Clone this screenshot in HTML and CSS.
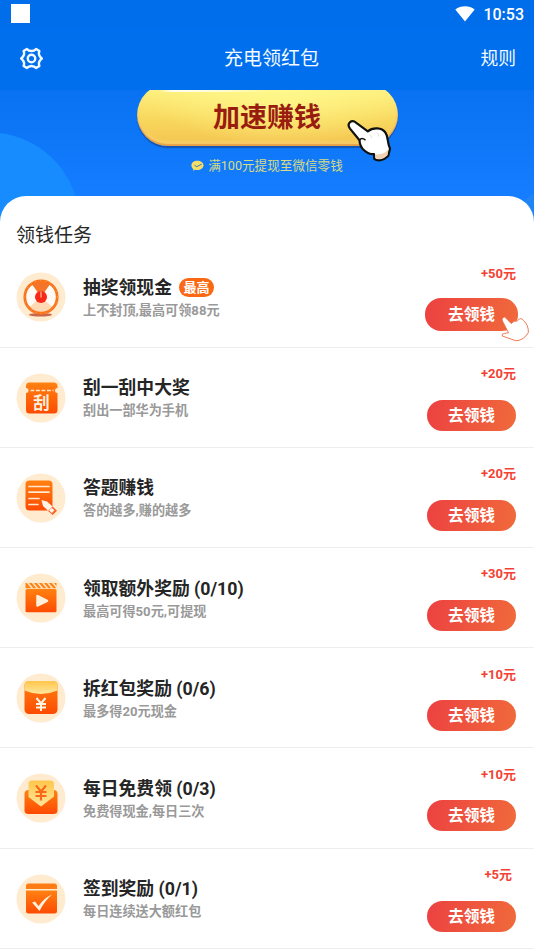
FILE: index.html
```html
<!DOCTYPE html>
<html lang="zh-CN">
<head>
<meta charset="utf-8">
<title>充电领红包</title>
<link rel="stylesheet" href="styles.css">
</head>
<body>
<svg class="defs" width="0" height="0" aria-hidden="true">
  <defs>
    <linearGradient id="orange" x1="0" y1="0" x2="0" y2="1"><stop offset="0" stop-color="#ff8112"/><stop offset="1" stop-color="#fd4b02"/></linearGradient>
    <linearGradient id="gold" x1="0" y1="0" x2="0" y2="1"><stop offset="0" stop-color="#ffc64a"/><stop offset="1" stop-color="#ffe69d"/></linearGradient>
  </defs>
</svg>
<div class="screen">
  <div class="status">
    <span class="square"></span>
    <svg class="wifi" width="20" height="16" viewBox="0 0 20 16"><path d="M.3 3.4C5.8-.8 14.2-.8 19.7 3.4L10 15.6z" fill="#fff"/></svg>
    <span class="time">10:53</span>
  </div>
  <header class="bar">
    <svg class="gear" width="23" height="23" viewBox="0 0 24 24" fill="none" stroke="#f2f8ff" stroke-width="2.5" stroke-linejoin="round"><path d="M7.200 2Q9 4.200 12 4.200T16.800 2L20.200 4.200Q19.200 7 20.300 9T22.800 12Q21.400 13 20.300 15T20.200 19.800L16.800 22Q15 19.800 12 19.800T7.200 22L3.800 19.800Q4.800 17 3.700 15T1.200 12Q2.600 11 3.700 9T3.800 4.200Z"/><circle cx="12" cy="12" r="3.900"/></svg>
    <h1>充电领红包</h1>
    <span class="rules">规则</span>
  </header>
  <section class="hero">
    <div class="boost">加速赚钱
      <svg class="hand" width="46" height="43" viewBox="0 0 46 43"><path d="M3 2.2C5 .6 7.2 1.1 9.3 2.8L20.8 11.4C26 6.8 35 7.6 38.4 12.5C41.7 17 39.8 22.2 43 28.4L41.2 36C36 41 30.4 41.3 27.3 38.9L27 34.2C19.600 34.500 12.700 28.100 12.500 20.200L3 8.600C1 6 1.300 3.800 3 2.200Z" fill="#fff" stroke="#10100f" stroke-width="2.200" stroke-linejoin="round"/><path d="M28.500 34.500C34.800 35 39.600 32.500 41.600 28.600L40.300 35.200C36 39.400 31.400 39.700 28.500 38z" fill="#f3d2b4"/><path d="M22.500 14.500q2 1.500 2 3.500M30 12.500q2 2 1.600 4" fill="none" stroke="#ddd3cd" stroke-width=".8"/><path d="M12.700 20.200Q14.500 16.900 18.500 20.200" fill="none" stroke="#111" stroke-width="1.500"/></svg>
    </div>
    <div class="hint">
      <svg width="13" height="12" viewBox="0 0 13 12"><path d="M6.300.8C2.800.8.4 2.800.4 5.400c0 1.500.8 2.800 2 3.600l-.3 1.700 2-.9c3.800 1.100 8.400-.8 8.400-4.500C12.500 2.800 9.800.8 6.300.8z" fill="#f5df67"/><path d="M3.500 5.200l2.200 1.500 5-2.600" fill="none" stroke="#3779b8" stroke-width="1"/></svg>
      <span>满100元提现至微信零钱</span>
    </div>
  </section>
  <main class="sheet">
    <h2>领钱任务</h2>
    <ul>
      <li class="task top">
        <svg class="icon" width="50" height="50" viewBox="0 0 50 50"><circle cx="25" cy="25" r="24.500" fill="#ffebd0"/><ellipse cx="24.500" cy="42.700" rx="11.500" ry="1.700" fill="#c9664b"/><circle cx="25" cy="25" r="16" fill="#fffaf4"/><path d="M25 25L15.800 11.900A16 16 0 0 1 34.200 11.900z" fill="#f57428"/><path d="M25 25L13 35.500A16 16 0 0 0 37 35.500z" fill="#ffd9b4"/><circle cx="25" cy="25" r="16.200" fill="none" stroke="#f9741b" stroke-width="2.800"/><circle cx="25" cy="25" r="16.200" fill="none" stroke="#ffa94f" stroke-width="1" stroke-dasharray="1 4"/><circle cx="25" cy="25" r="6" fill="#f82916"/><path d="M25 19.500v6" stroke="#ffc29a" stroke-width="1.200"/></svg>
        <div class="info"><div class="name">抽奖领现金<span class="tag">最高</span></div><p>上不封顶,最高可领88元</p></div>
        <div class="side"><span class="reward">+50元</span><div class="go">去领钱
          <svg class="tap" width="29" height="26" viewBox="0 0 29 26"><path d="M2.100 1.500Q3.700.2 5 2.200L10.200 7.600Q12.700 4.300 16.400 4.900Q20 .4 22.600 4.700Q27.500 8.800 27.400 16.500Q23 24.200 15 24.800L1.300 20Q.2 17.800 3.400 17.400L7.500 16.800L1.600 5.300Q.3 2.900 2.100 1.500Z" fill="#fff" stroke="#ee6b45" stroke-width=".9"/></svg>
        </div></div>
      </li>
      <li class="task">
        <svg class="icon" width="50" height="50" viewBox="0 0 50 50"><circle cx="25" cy="25" r="24.500" fill="#ffebd0"/><path d="M13.500 9.500h25a3.500 3.500 0 0 1 3 3V15a2.500 2.500 0 0 0 0 5v17a3.500 3.500 0 0 1-3.500 3.500H13.500A3.500 3.500 0 0 1 10 37V20a2.500 2.500 0 0 0 0-5v-2.500a3.500 3.500 0 0 1 3.500-3z" fill="url(#orange)"/><path d="M14.500 17.500h23" stroke="#ffe9cc" stroke-width="1.300" stroke-dasharray="3.800 1.700"/><text x="25.500" y="35.500" text-anchor="middle" class="glyph">刮</text></svg>
        <div class="info"><div class="name">刮一刮中大奖</div><p>刮出一部华为手机</p></div>
        <div class="side"><span class="reward">+20元</span><div class="go">去领钱</div></div>
      </li>
      <li class="task">
        <svg class="icon" width="50" height="50" viewBox="0 0 50 50"><circle cx="25" cy="25" r="24.500" fill="#ffebd0"/><rect x="9.500" y="7.500" width="27" height="30" rx="4" fill="url(#orange)"/><path d="M13 13.500h20M13 19.200h20M13 25.500h10M13 31.500h9" stroke="#ffe8cd" stroke-width="1.700" stroke-linecap="round"/><path d="M25.500 27L31 28.500 40.500 37l-4.500 4.500-9-8.500z" fill="#fff4e6"/><path d="M36.500 33.500l4.500 4.200-4.300 4.400-4.700-4.200z" fill="#f9632a"/><path d="M35.600 34.800l2.800 2.500-2.500 2.600-2.800-2.500z" fill="#fff4e6"/></svg>
        <div class="info"><div class="name">答题赚钱</div><p>答的越多,赚的越多</p></div>
        <div class="side"><span class="reward">+20元</span><div class="go">去领钱</div></div>
      </li>
      <li class="task">
        <svg class="icon" width="50" height="50" viewBox="0 0 50 50"><circle cx="25" cy="25" r="24.500" fill="#ffebd0"/><rect x="9.500" y="16" width="31" height="23.300" rx="1.500" fill="url(#orange)"/><path d="M9.500 10h31v5.300h-31z" fill="#ff8417"/><path d="M11.500 9.500l5 6M16.500 9.500l5 6M21.500 9.500l5 6M26.500 9.500l5 6M31.500 9.500l5 6M36.500 9.500l5 6" stroke="#ffe4c0" stroke-width="1.600"/><path d="M21.500 23v9.500l9.500-4.700z" fill="#fff0dc" stroke="#fff0dc" stroke-width="2.500" stroke-linejoin="round"/></svg>
        <div class="info"><div class="name">领取额外奖励 (0/10)</div><p>最高可得50元,可提现</p></div>
        <div class="side"><span class="reward">+30元</span><div class="go">去领钱</div></div>
      </li>
      <li class="task">
        <svg class="icon" width="50" height="50" viewBox="0 0 50 50"><circle cx="25" cy="25" r="24.500" fill="#ffebd0"/><rect x="8.500" y="8" width="33" height="33" rx="4.500" fill="url(#orange)"/><path d="M8.500 17.500V12.500a4.500 4.500 0 0 1 4.500-4.500h24a4.500 4.500 0 0 1 4.500 4.500v5Q25 24.500 8.500 17.500z" fill="url(#gold)"/><path d="M20.500 25l4.500 5.500 4.500-5.500M20 31h10M20 34.500h10M25 30.500V38" fill="none" stroke="#fff5e4" stroke-width="2"/></svg>
        <div class="info"><div class="name">拆红包奖励 (0/6)</div><p>最多得20元现金</p></div>
        <div class="side"><span class="reward">+10元</span><div class="go">去领钱</div></div>
      </li>
      <li class="task">
        <svg class="icon" width="50" height="50" viewBox="0 0 50 50"><circle cx="25" cy="25" r="24.500" fill="#ffebd0"/><path d="M8.500 21q0-4 4-4h25q4 0 4 4v16.500q0 3.500-4 3.500h-25q-4 0-4-3.500z" fill="url(#orange)"/><path d="M12.500 11q0-3.500 3.500-3.500h18.500q3.500 0 3.500 3.500v12.500L25 33.500 12.500 24z" fill="url(#gold)"/><path d="M20 12.500l5 6 5-6M19.500 19h11M19.500 23h11M25 18.500v9" fill="none" stroke="#fa6819" stroke-width="2.200"/></svg>
        <div class="info"><div class="name">每日免费领 (0/3)</div><p>免费得现金,每日三次</p></div>
        <div class="side"><span class="reward">+10元</span><div class="go">去领钱</div></div>
      </li>
      <li class="task">
        <svg class="icon" width="50" height="50" viewBox="0 0 50 50"><circle cx="25" cy="25" r="24.500" fill="#ffebd0"/><path d="M10 16.500h31V37q0 2.500-2.500 2.500h-26Q10 39.500 10 37z" fill="url(#orange)"/><path d="M10 15v-3q0-2.500 2.500-2.500h26q2.500 0 2.500 2.500v3z" fill="#ff7b13"/><path d="M16 28.500l3-1 3.500 4.500Q28 24 36 20.500 28.500 27 23.500 37z" fill="#fff0dc"/></svg>
        <div class="info"><div class="name">签到奖励 (0/1)</div><p>每日连续送大额红包</p></div>
        <div class="side"><span class="reward short">+5元</span><div class="go">去领钱</div></div>
      </li>
    </ul>
  </main>
</div>
</body>
</html>
```
FILE: styles.css
```css
* { box-sizing: border-box; margin: 0; padding: 0; }
body { font-family: Roboto, "Noto Sans CJK SC", sans-serif; background: #fff; }
.defs { position: absolute; }
.screen { width: 534px; height: 949px; overflow: hidden; background: #147bfb; }
.status { height: 27px; background: #006deb; display: flex; align-items: center; padding: 0 10px 0 11px; }
.square { width: 19px; height: 19px; background: #fff; }
.wifi { margin-left: auto; margin-right: 8px; }
.time { color: #fff; font-size: 16px; line-height: 27px; font-weight: 500; padding-top: 2px; }
.bar { height: 63px; background: #006fee; display: grid; grid-template-columns: 60px 1fr 60px; align-items: center; padding: 0 18px 0 20px; color: #f5faff; }
.bar h1 { font-size: 19px; font-weight: 400; text-align: center; line-height: 28px; padding: 1px 0 0 7px; }
.rules { font-size: 17.800px; line-height: 28px; text-align: right; padding-top: 1px; }
.hero { height: 132px; margin-bottom: -26px; overflow: hidden; display: flex; flex-direction: column; align-items: center; background: radial-gradient(circle at -11px 133px, #168cff 0 90px, transparent 91px), radial-gradient(circle at 547px 129px, #2184f5 0 28px, transparent 29px), linear-gradient(#0872f2, #157dff 105px); }
.boost { position: relative; flex: none; width: 261px; height: 62px; margin-top: -6px; border-radius: 31px; text-align: center; color: #991c10; font-size: 27px; font-weight: 700; line-height: 69px; background: linear-gradient(90deg, transparent, #fffef0 12%, #fffccb 60%, transparent) 22px 0 / 110px 8px no-repeat, radial-gradient(ellipse at 55% 0, #fff98d, transparent 70%), linear-gradient(#fff484, #f8d75d 58%, #f4c34f); box-shadow: inset 0 -2px 1px #e7a148, inset 0 -5px 3px #f9ce68, 0 2px 1px #1454b5; }
.hand { position: absolute; left: 210px; top: 36px; }
.hint { display: flex; align-items: center; gap: 4px; height: 20px; margin-top: 10px; font-size: 12.600px; line-height: 20px; color: #d9da83; }
.sheet { position: relative; background: #fff; border-radius: 26px 26px 0 0; height: 760px; }
.sheet h2 { height: 51.400px; padding: 25.500px 16px 0; font-size: 19px; line-height: 28px; font-weight: 400; color: #272727; }
.sheet ul { list-style: none; }
.task { height: 100.200px; display: flex; align-items: flex-start; border-bottom: 1px solid #eee; padding: 25px 18px 0 15.500px; }
.icon { flex: none; }
.glyph { font: 700 16.500px "Noto Sans CJK SC", sans-serif; fill: #fff0de; }
.info { margin-left: 17.500px; flex: 1; padding-top: 2.600px; }
.name { display: flex; align-items: center; gap: 7px; height: 25px; font-size: 17.800px; line-height: 25px; font-weight: 700; color: #252525; white-space: nowrap; }
.tag { width: 35px; height: 19px; border-radius: 10px; background: #fb6813; color: #fff; font-size: 13px; line-height: 19px; text-align: center; }
.info p { font-size: 13.150px; line-height: 20px; font-weight: 700; color: #999; margin-top: 1px; }
.side { width: 89px; display: flex; flex-direction: column; align-items: flex-end; margin-top: -8.500px; }
.reward { font-size: 13px; line-height: 20px; font-weight: 700; color: #f34233; }
.short { margin-right: 4px; }
.go { position: relative; width: 89px; height: 31px; margin-top: 15.500px; border-radius: 16px; background: linear-gradient(100deg, #ec4141, #f06a3b); color: #fff; font-size: 15.700px; line-height: 31px; font-weight: 700; text-align: center; }
.top .go { width: 93px; height: 33px; line-height: 33px; margin: 14.500px -2px 0 0; }
.tap { position: absolute; left: 75.500px; top: 18px; }
```
